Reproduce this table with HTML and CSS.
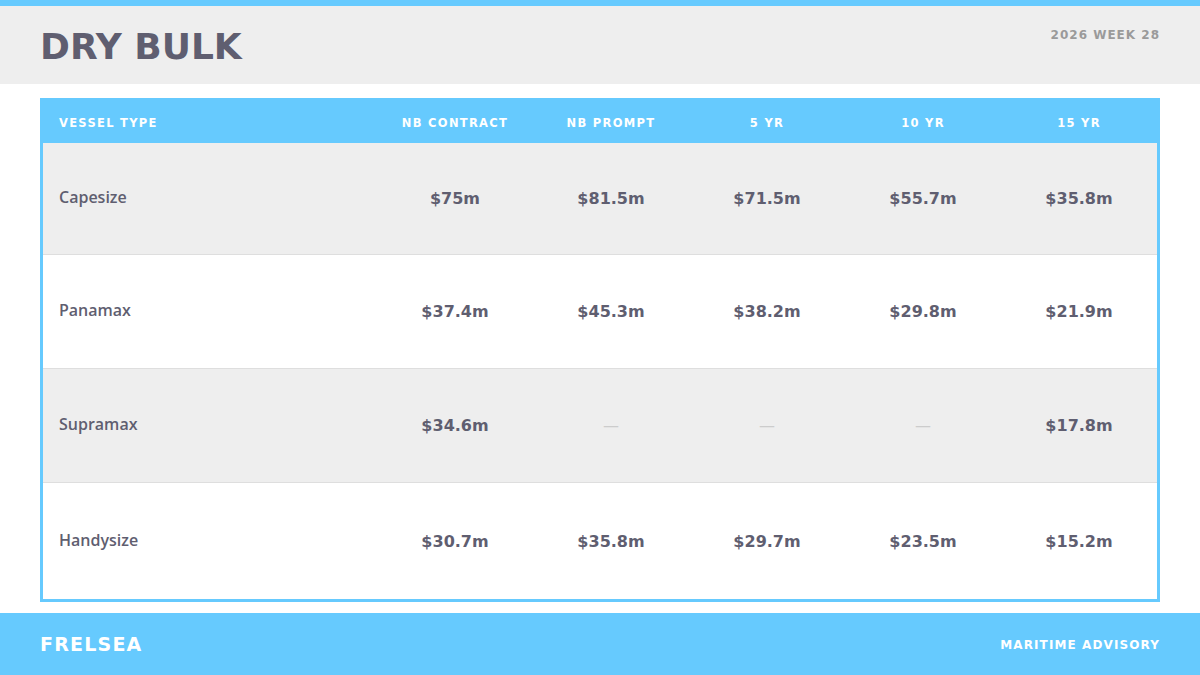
FILE: index.html
```html
<!DOCTYPE html>
<html lang="en">
<head>
<meta charset="utf-8">
<title>Dry Bulk</title>
<link rel="stylesheet" href="styles.css">
</head>
<body>
<div class="topbar"></div>
<header class="header">
  <h1 class="title">DRY BULK</h1>
  <div class="week">2026 WEEK 28</div>
</header>
<main class="main">
  <div class="table">
    <div class="row head">
      <div class="cell label">VESSEL TYPE</div>
      <div class="cell">NB CONTRACT</div>
      <div class="cell">NB PROMPT</div>
      <div class="cell">5 YR</div>
      <div class="cell">10 YR</div>
      <div class="cell">15 YR</div>
    </div>
    <div class="row body alt r1">
      <div class="cell label">Capesize</div>
      <div class="cell val">$75m</div>
      <div class="cell val">$81.5m</div>
      <div class="cell val">$71.5m</div>
      <div class="cell val">$55.7m</div>
      <div class="cell val">$35.8m</div>
    </div>
    <div class="row body r2">
      <div class="cell label">Panamax</div>
      <div class="cell val">$37.4m</div>
      <div class="cell val">$45.3m</div>
      <div class="cell val">$38.2m</div>
      <div class="cell val">$29.8m</div>
      <div class="cell val">$21.9m</div>
    </div>
    <div class="row body alt r3">
      <div class="cell label">Supramax</div>
      <div class="cell val">$34.6m</div>
      <div class="cell dash">—</div>
      <div class="cell dash">—</div>
      <div class="cell dash">—</div>
      <div class="cell val">$17.8m</div>
    </div>
    <div class="row body last">
      <div class="cell label">Handysize</div>
      <div class="cell val">$30.7m</div>
      <div class="cell val">$35.8m</div>
      <div class="cell val">$29.7m</div>
      <div class="cell val">$23.5m</div>
      <div class="cell val">$15.2m</div>
    </div>
  </div>
</main>
<footer class="footer">
  <div class="brand">FRELSEA</div>
  <div class="tag">MARITIME ADVISORY</div>
</footer>
</body>
</html>
```
FILE: styles.css
```css
* { box-sizing: border-box; }
html, body { margin: 0; padding: 0; }
body {
  width: 1200px;
  height: 675px;
  overflow: hidden;
  background: #ffffff;
  font-family: "DejaVu Sans", "Liberation Sans", sans-serif;
  color: #5f5e70;
  display: flex;
  flex-direction: column;
}
.topbar { height: 6px; background: #66cafe; }
.header {
  height: 78px;
  background: #eeeeee;
  padding: 0 40px;
  display: flex;
  justify-content: space-between;
  align-items: flex-start;
}
.title {
  margin: 0;
  padding-top: 19px;
  font-size: 36px;
  line-height: 44px;
  font-weight: 700;
  color: #5f5e70;
  letter-spacing: 0;
}
.week {
  padding-top: 22px;
  font-size: 12px;
  font-weight: 700;
  letter-spacing: 1px;
  color: #9a9a9a;
  line-height: 14px;
}
.main { padding: 14px 40px 11px; flex: 1; display: flex; }
.table {
  flex: 1;
  border: 3px solid #66cafe;
  border-top: 0;
  display: flex;
  flex-direction: column;
}
.row {
  display: grid;
  grid-template-columns: 1fr repeat(5, 156px);
  align-items: center;
}
.row.head {
  height: 45px;
  padding: 4px 3px 0;
  background: #66cafe;
  margin: 0 -3px;
  color: #ffffff;
  font-size: 11.5px;
  font-weight: 700;
  letter-spacing: 1.3px;
}
.row.body { background: #ffffff; border-bottom: 1px solid #dedede; }
.row.r1 { height: 112px; }
.row.r2, .row.r3 { height: 114px; }
.row.body.alt { background: #eeeeee; }
.row.body.last { border-bottom: 0; flex: 1; }
.cell { text-align: center; }
.cell.label { text-align: left; padding-left: 16px; }
.body .label {
  font-family: "Open Sans", "Noto Sans", sans-serif;
  font-size: 16px;
  font-weight: 600;
  color: #5f5e70;
  padding-bottom: 3px;
}
.val { font-size: 16px; font-weight: 700; color: #5f5e70; }
.dash { color: #cccccc; font-size: 16px; }
.footer {
  height: 62px;
  background: #66cafe;
  padding: 0 40px;
  display: flex;
  justify-content: space-between;
  align-items: center;
  color: #ffffff;
}
.brand { font-size: 19px; font-weight: 700; letter-spacing: 1.2px; }
.tag { font-size: 12px; font-weight: 700; letter-spacing: 1.1px; padding-top: 2px; }
```
